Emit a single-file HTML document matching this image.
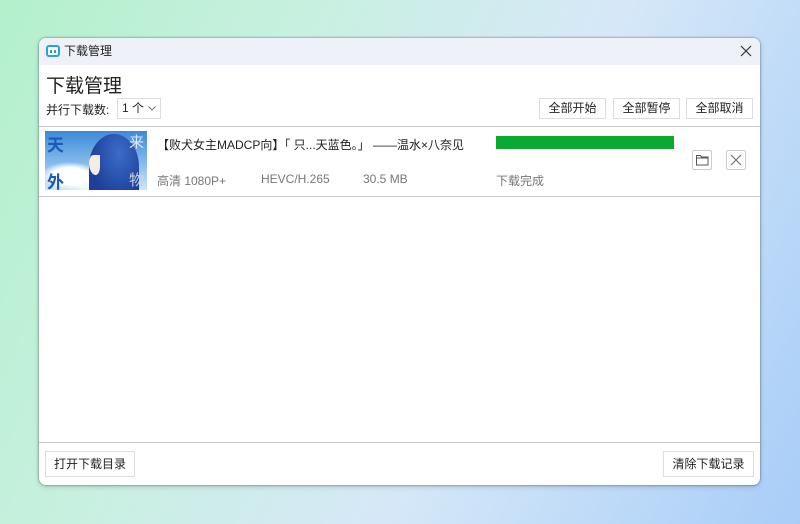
<!DOCTYPE html>
<html><head><meta charset="utf-8"><style>
*{margin:0;padding:0;box-sizing:border-box}
body{width:800px;height:524px;overflow:hidden;font-family:"Liberation Sans","Noto Sans CJK SC",sans-serif;color:#222;
background:linear-gradient(115deg,#b3f0cc 0%,#c8f0e0 30%,#d6e8f8 60%,#a8cdf8 100%);position:relative}
.win{position:absolute;left:39px;top:38px;width:721px;height:447px;background:#fff;border-radius:7px;overflow:hidden;box-shadow:0 0 2px rgba(0,0,0,.5),0 2px 6px rgba(0,0,0,.15)}
.tb{height:27px;background:#eef2f8;position:relative;font-size:12px;line-height:27px;padding-left:25px}
.logo{position:absolute;left:7px;top:7px;width:14px;height:12px;border:2px solid #2aa3dc;border-radius:3px;background:#fff}
.logo:before,.logo:after{content:"";position:absolute;top:3px;width:2px;height:3px;background:#2aa3dc}
.logo:before{left:2px}.logo:after{right:2px}
.x{position:absolute;right:8px;top:7px;width:12px;height:12px}
h1{position:absolute;left:7px;top:33px;font-size:19px;font-weight:normal}
.lbl{position:absolute;left:7px;top:63px;font-size:12px}
.sel{position:absolute;left:78px;top:60px;width:44px;height:21px;border:1px solid #ddd;font-size:12px;line-height:19px;padding-left:4px}
.sel svg{position:absolute;right:4px;top:7px}
.btn{position:absolute;height:21px;border:1px solid #ddd;background:#fff;font-size:12px;line-height:19px;text-align:center}
.hl{position:absolute;left:0;width:721px;height:1px;background:#c8c8c8}
.thumb{position:absolute;left:6px;top:93px;width:102px;height:59px;overflow:hidden;
background:radial-gradient(ellipse 30px 14px at 25px 45px,#fff 60%,transparent 100%),radial-gradient(ellipse 35px 15px at 55px 52px,#eef6ff 60%,transparent 100%),linear-gradient(180deg,#3c8ad8,#8cc0ee 60%,#cfe6fb)}
.hair{position:absolute;left:44px;top:3px;width:50px;height:65px;background:radial-gradient(ellipse at 60% 30%,#3a6cc8,#1d3f9a 70%);border-radius:50% 50% 10% 10%}
.face{position:absolute;left:44px;top:24px;width:11px;height:20px;background:#f6ece6;border-radius:40% 0 40% 60%}
.t{position:absolute;font-size:17px;font-weight:bold;color:#1a5bb8}
.t2{position:absolute;font-size:15px;color:#dfe6f2}
.row{position:absolute;font-size:12px}
.g{color:#777}
.bar{position:absolute;left:457px;top:98px;width:178px;height:13px;background:#0aaa32}
.ib{position:absolute;top:112px;width:20px;height:20px;border:1px solid #ccc;border-radius:2px}
.ib svg{position:absolute;left:0;top:0}
</style></head><body>
<div class="win">
<div class="tb"><div class="logo"></div>下载管理<svg class="x" viewBox="0 0 12 12"><path d="M1 1l10 10M11 1L1 11" stroke="#333" stroke-width="1.2"/></svg></div>
<h1>下载管理</h1>
<div class="lbl">并行下载数:</div>
<div class="sel">1 个<svg width="8" height="5" viewBox="0 0 8 5"><path d="M.5.5L4 4 7.5.5" fill="none" stroke="#777"/></svg></div>
<div class="btn" style="left:500px;top:60px;width:67px">全部开始</div>
<div class="btn" style="left:574px;top:60px;width:67px">全部暂停</div>
<div class="btn" style="left:647px;top:60px;width:67px">全部取消</div>
<div class="hl" style="top:88px"></div>
<div class="thumb"><div class="hair"></div><div class="face"></div>
<div class="t" style="left:2px;top:0">天</div><div class="t" style="left:2px;top:37px">外</div>
<div class="t2" style="left:84px;top:0">来</div><div class="t2" style="left:84px;top:38px;color:#c9d3e4">物</div></div>
<div class="row" style="left:118px;top:98px">【败犬女主MADCP向】「 只...天蓝色。」 ——温水×八奈见</div>
<div class="row g" style="left:118px;top:134px">高清 1080P+</div>
<div class="row g" style="left:222px;top:134px">HEVC/H.265</div>
<div class="row g" style="left:324px;top:134px">30.5 MB</div>
<div class="row g" style="left:457px;top:134px">下载完成</div>
<div class="bar"></div>
<div class="ib" style="left:653px"><svg width="18" height="18" viewBox="0 0 18 18"><path d="M3.5 4.5h4l1 1.5h6.5v8H3.5z" fill="none" stroke="#555" stroke-width="1"/><path d="M3.5 7h11.5" stroke="#555"/></svg></div>
<div class="ib" style="left:687px"><svg width="18" height="18" viewBox="0 0 18 18"><path d="M4 4l10 10M14 4L4 14" stroke="#666" stroke-width="1"/></svg></div>
<div class="hl" style="top:158px"></div>
<div class="hl" style="top:404px"></div>
<div class="btn" style="left:6px;top:413px;width:90px;height:26px;line-height:24px">打开下载目录</div>
<div class="btn" style="left:624px;top:413px;width:91px;height:26px;line-height:24px">清除下载记录</div>
</div>
</body></html>
